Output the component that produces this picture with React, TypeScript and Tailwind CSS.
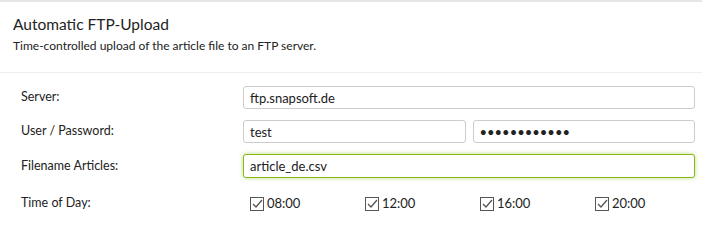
import React from "react";

const times = ["08:00", "12:00", "16:00", "20:00"];

const CheckIcon: React.FC = () => (
  <svg width="14" height="14" viewBox="0 0 14 14" className="shrink-0">
    <rect x="0.5" y="0.5" width="13" height="13" fill="#fff" stroke="#555" />
    <path d="M3 7l3 3 6-7" fill="none" stroke="#555" strokeWidth="1.3" />
  </svg>
);

const inputCls =
  "h-[23px] w-full rounded-[3px] border border-[#cccccc] bg-white px-[6px] text-[13px] text-[#222] outline-none";

export default function App() {
  return (
    <div
      className="h-[248px] w-[702px] bg-white text-[#222]"
      style={{ fontFamily: "Lato, 'Noto Sans', sans-serif" }}
    >
      <div className="h-[2px] bg-[#e6e6e6]" />
      <div className="px-[13px] pt-[12px] pb-[18px]">
        <h2 className="text-[15.5px] leading-[21px] text-[#222]">Automatic FTP-Upload</h2>
        <p className="mt-[3px] text-[12px] leading-[16px] text-[#222]">
          Time-controlled upload of the article file to an FTP server.
        </p>
      </div>
      <div className="h-px bg-[#eeeeee]" />

      <div className="flex flex-col gap-[11px] pt-[13px] pr-[7px] pl-[21px]">
        <div className="grid grid-cols-[222px_1fr] items-center">
          <label className="text-[12.5px]">Server:</label>
          <input className={inputCls} defaultValue="ftp.snapsoft.de" />
        </div>
        <div className="grid grid-cols-[222px_1fr] items-center">
          <label className="text-[12.5px]">User / Password:</label>
          <div className="grid grid-cols-2 gap-[7px]">
            <input className={inputCls} defaultValue="test" />
            <input className={inputCls} type="password" defaultValue="passwordxyz1" />
          </div>
        </div>
        <div className="grid grid-cols-[222px_1fr] items-center">
          <label className="text-[12.5px]">Filename Articles:</label>
          <input
            className="h-[24px] w-full rounded-[3px] border border-[#86b81a] bg-white px-[6px] text-[13px] text-[#222] shadow-[0_0_4px_rgba(134,184,26,0.55)] outline-none"
            defaultValue="article_de.csv"
          />
        </div>
        <div className="grid grid-cols-[222px_1fr] items-center pt-[5px]">
          <label className="text-[12.5px]">Time of Day:</label>
          <div className="grid grid-cols-[115px_115px_115px_115px] pl-[7px]">
            {times.map((t) => (
              <div key={t} className="flex items-center gap-[3px] text-[13px]">
                <CheckIcon />
                <span>{t}</span>
              </div>
            ))}
          </div>
        </div>
      </div>
    </div>
  );
}
